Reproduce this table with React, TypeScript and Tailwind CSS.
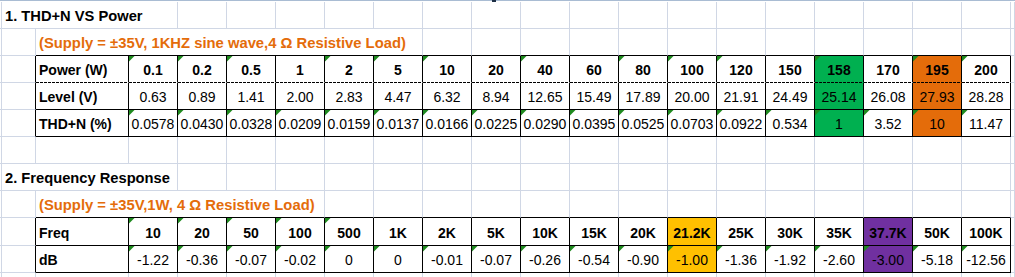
import React from "react";

type Border = "g" | "k" | "d";
type Fill = "none" | "green" | "orange" | "yellow" | "purple";

const W: Record<number, string> = {
  2: "w-[2px]",
  34: "w-[34px]",
  49: "w-[49px]",
  93: "w-[93px]",
  176: "w-[176px]",
  289: "w-[289px]",
  387: "w-[387px]",
};

const R: Record<Border, string> = {
  g: "border-r-[#d0d7e5]",
  k: "border-r-black",
  d: "border-r-black",
};
const B: Record<Border, string> = {
  g: "border-b-[#d0d7e5]",
  k: "border-b-black",
  d: "border-b-transparent",
};
const F: Record<Fill, string> = {
  none: "bg-white",
  green: "bg-[#00b050]",
  orange: "bg-[#e46c0a]",
  yellow: "bg-[#ffc000]",
  purple: "bg-[#7030a0]",
};

type CellProps = {
  w?: number;
  fill?: boolean;
  r?: Border;
  b?: Border;
  bg?: Fill;
  bold?: boolean;
  left?: boolean;
  tri?: boolean;
  kind?: "cell" | "title" | "sub";
  children?: React.ReactNode;
};

function Cell({ w, fill, r = "g", b = "g", bg = "none", bold, left, tri, kind = "cell", children }: CellProps) {
  const size =
    kind === "title"
      ? "text-[14.7px] text-black font-bold"
      : kind === "sub"
      ? "text-[14.8px] text-[#e46c0a] font-bold"
      : "text-[14px] text-black";
  return (
    <div
      className={[
        "relative h-full border-r border-b flex items-end pb-[4px] whitespace-nowrap leading-[16px]",
        fill ? "flex-1 min-w-0" : "shrink-0",
        w ? W[w] : "",
        R[r],
        B[b],
        F[bg],
        size,
        bold ? "font-bold" : "",
        left ? "justify-start pl-[3px]" : "justify-center",
      ].join(" ")}
    >
      {tri && (
        <svg className="absolute left-0 top-0" width="6" height="6" viewBox="0 0 6 6">
          <polygon points="0,0 5.5,0 0,5.5" fill="#1f8a1f" />
        </svg>
      )}
      {b === "d" && (
        <div className="absolute left-0 right-0 -bottom-px h-px bg-[repeating-linear-gradient(90deg,#000_0px,#000_3px,transparent_3px,transparent_4px)]" />
      )}
      {children}
    </div>
  );
}

const power = ["0.1", "0.2", "0.5", "1", "2", "5", "10", "20", "40", "60", "80", "100", "120", "150", "158", "170", "195", "200"];
const level = ["0.63", "0.89", "1.41", "2.00", "2.83", "4.47", "6.32", "8.94", "12.65", "15.49", "17.89", "20.00", "21.91", "24.49", "25.14", "26.08", "27.93", "28.28"];
const thd = ["0.0578", "0.0430", "0.0328", "0.0209", "0.0159", "0.0137", "0.0166", "0.0225", "0.0290", "0.0395", "0.0525", "0.0703", "0.0922", "0.534", "1", "3.52", "10", "11.47"];
const freq = ["10", "20", "50", "100", "500", "1K", "2K", "5K", "10K", "15K", "20K", "21.2K", "25K", "30K", "35K", "37.7K", "50K", "100K"];
const db = ["-1.22", "-0.36", "-0.07", "-0.02", "0", "0", "-0.01", "-0.07", "-0.26", "-0.54", "-0.90", "-1.00", "-1.36", "-1.92", "-2.60", "-3.00", "-5.18", "-12.56"];

const powerTri = new Set([0, 1, 2, 4, 5, 6, 8, 10, 11, 12, 14, 16, 17]);
const freqTri = new Set([0, 1, 2, 3, 4]);

const fill1 = (i: number): Fill => (i === 14 ? "green" : i === 16 ? "orange" : "none");
const fill2 = (i: number): Fill => (i === 11 ? "yellow" : i === 15 ? "purple" : "none");

function Row({ h = 27, children }: { h?: 27 | 28; children: React.ReactNode }) {
  return <div className={h === 28 ? "flex h-[28px]" : "flex h-[27px]"}>{children}</div>;
}

function Blank({ n, b = "g" }: { n: number; b?: Border }) {
  return (
    <>
      {Array.from({ length: n }).map((_, i) => (
        <Cell key={i} w={49} b={b} />
      ))}
    </>
  );
}

export default function App() {
  return (
    <div className="relative w-[1015px] h-[277px] overflow-hidden bg-white font-['Liberation_Sans',Arial,sans-serif]">
      <div className="h-[2px] border-t border-t-[#a9bcd3]" />
      <div className="absolute left-[492px] top-0 w-[4px] h-[2px] bg-[#1e2f45]" />

      {/* Row 1: title */}
      <Row>
        <Cell w={2} />
        <Cell w={176} left kind="title">1. THD+N VS Power</Cell>
        <Blank n={17} />
        <Cell fill />
      </Row>

      {/* Row 2: subtitle */}
      <Row>
        <Cell w={2} />
        <Cell w={34} />
        <Cell w={387} b="k" left kind="sub">(Supply = ±35V, 1KHZ sine wave,4 Ω Resistive Load)</Cell>
        <Blank n={12} b="k" />
        <Cell fill />
      </Row>

      {/* Row 3: header */}
      <Row>
        <Cell w={2} />
        <Cell w={34} r="k" />
        <Cell w={93} r="k" b="d" bold left>Power (W)</Cell>
        {power.map((v, i) => (
          <Cell key={i} w={49} r="k" b="d" bold bg={fill1(i)} tri={powerTri.has(i)}>
            {v}
          </Cell>
        ))}
        <Cell fill />
      </Row>

      {/* Row 4: level */}
      <Row>
        <Cell w={2} />
        <Cell w={34} r="k" />
        <Cell w={93} r="k" b="k" bold left>Level (V)</Cell>
        {level.map((v, i) => (
          <Cell key={i} w={49} r="k" b="k" bg={fill1(i)}>
            {v}
          </Cell>
        ))}
        <Cell fill />
      </Row>

      {/* Row 5: THD */}
      <Row>
        <Cell w={2} />
        <Cell w={34} r="k" />
        <Cell w={93} r="k" b="k" bold left>THD+N (%)</Cell>
        {thd.map((v, i) => (
          <Cell key={i} w={49} r="k" b="k" bg={fill1(i)} tri>
            {v}
          </Cell>
        ))}
        <Cell fill />
      </Row>

      {/* Row 6: empty */}
      <Row>
        <Cell w={2} />
        <Cell w={34} />
        <Cell w={93} />
        <Blank n={18} />
        <Cell fill />
      </Row>

      {/* Row 7: title 2 */}
      <Row>
        <Cell w={2} />
        <Cell w={176} left kind="title">2. Frequency Response</Cell>
        <Blank n={17} />
        <Cell fill />
      </Row>

      {/* Row 8: subtitle 2 */}
      <Row>
        <Cell w={2} />
        <Cell w={34} />
        <Cell w={289} b="k" left kind="sub">(Supply = ±35V,1W, 4 Ω Resistive Load)</Cell>
        <Blank n={14} b="k" />
        <Cell fill />
      </Row>

      {/* Row 9: freq header */}
      <Row h={28}>
        <Cell w={2} />
        <Cell w={34} r="k" />
        <Cell w={93} r="k" b="k" bold left>Freq</Cell>
        {freq.map((v, i) => (
          <Cell key={i} w={49} r="k" b="k" bold bg={fill2(i)} tri={freqTri.has(i)}>
            {v}
          </Cell>
        ))}
        <Cell fill />
      </Row>

      {/* Row 10: dB */}
      <Row>
        <Cell w={2} />
        <Cell w={34} r="k" />
        <Cell w={93} r="k" b="k" bold left>dB</Cell>
        {db.map((v, i) => (
          <Cell key={i} w={49} r="k" b="k" bg={fill2(i)} tri>
            {v}
          </Cell>
        ))}
        <Cell fill />
      </Row>

      {/* Row 11: partial */}
      <Row>
        <Cell w={2} />
        <Cell w={34} />
        <Cell w={93} />
        <Blank n={18} />
        <Cell fill />
      </Row>
    </div>
  );
}
